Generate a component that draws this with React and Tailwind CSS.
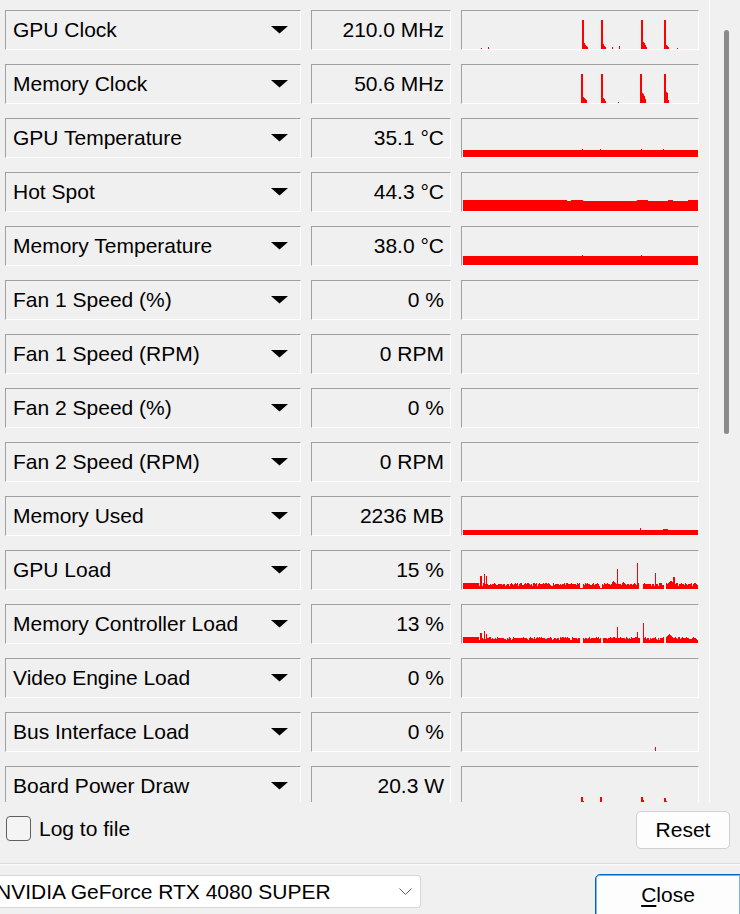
import React from "react";

const W = 236;
const H = 38;

// small seeded random so the graphs look the same every render
function makeRand(seed) {
  let s = seed;
  return () => {
    s = (s * 16807) % 2147483647;
    return s / 2147483647;
  };
}

const empty = () => new Array(W).fill(0);

function put(a, x, vals) {
  vals.forEach((v, i) => {
    if (x + i >= 0 && x + i < W) a[x + i] = Math.max(a[x + i], v);
  });
}

function clockSeries(spikes, ticks) {
  const a = empty();
  spikes.forEach(([x, h, tail]) => put(a, x, [h, h, ...tail]));
  ticks.forEach(([x, h]) => put(a, x, [h]));
  return a;
}

function bandSeries(h, bumps) {
  const a = new Array(W).fill(h);
  a[0] = 0;
  bumps.forEach(([x, v]) => put(a, x, v));
  return a;
}

function hotSpotSeries() {
  const r = makeRand(77);
  const a = new Array(W).fill(11);
  a[0] = 0;
  let i = 95;
  while (i < W) {
    const len = 4 + Math.floor(r() * 14);
    const v = r() > 0.5 ? 10 : 11;
    for (let k = i; k < Math.min(W, i + len); k++) a[k] = v;
    i += len;
  }
  return a;
}

function loadSeries(seed, spikes, gaps, humps) {
  const r = makeRand(seed);
  const a = empty();
  for (let i = 1; i < W; i++) {
    if (i < 17) {
      a[i] = 6;
      continue;
    }
    const n = r();
    a[i] = n < 0.08 ? 3 : n < 0.3 ? 4 : n < 0.8 ? 5 : 6;
  }
  humps.forEach(([x, vals]) => vals.forEach((v, k) => (a[x + k] = v)));
  gaps.forEach(([x, len, v]) => {
    for (let k = x; k < x + len; k++) a[k] = v;
  });
  spikes.forEach(([x, h, w]) => {
    for (let k = 0; k < w; k++) a[x + k] = h;
  });
  return a;
}

const graphs = {
  gpuClock: clockSeries(
    [
      [120, 29, [6, 4, 3, 2]],
      [139, 29, [5, 3, 2]],
      [179, 29, [7, 6, 4, 2]],
      [202, 29, [4, 3, 2]],
    ],
    [
      [19, 1],
      [26, 2],
      [150, 2],
      [157, 3],
      [215, 1],
    ]
  ),
  memClock: clockSeries(
    [
      [119, 29, [6, 5, 4, 3]],
      [139, 29, [5, 4, 2]],
      [178, 29, [10, 9, 7, 4]],
      [202, 29, [11, 10, 3]],
    ],
    [[156, 1]]
  ),
  gpuTemp: bandSeries(7, [
    [120, [8]],
    [138, [8]],
    [179, [8]],
    [201, [8]],
  ]),
  hotSpot: hotSpotSeries(),
  memTemp: bandSeries(9, [
    [120, [10]],
    [179, [10]],
  ]),
  memUsed: bandSeries(5, [
    [178, [7]],
    [201, [6, 6, 6, 6, 6]],
  ]),
  gpuLoad: loadSeries(
    11,
    [
      [18, 13, 2],
      [22, 15, 1],
      [24, 13, 1],
      [155, 20, 1],
      [175, 26, 1],
      [193, 16, 1],
      [211, 12, 2],
    ],
    [
      [118, 3, 1],
      [138, 2, 1],
      [177, 4, 0],
      [202, 2, 0],
    ],
    [
      [150, [7, 8, 7, 6]],
      [160, [6, 7, 6]],
      [206, [6, 7, 8, 8, 7]],
    ]
  ),
  memLoad: loadSeries(
    23,
    [
      [18, 10, 2],
      [22, 12, 1],
      [24, 9, 1],
      [155, 16, 1],
      [175, 11, 1],
      [181, 20, 1],
    ],
    [
      [118, 3, 0],
      [139, 2, 0],
      [178, 4, 0],
      [202, 2, 0],
    ],
    [[205, [7, 8, 9, 8, 7, 6]]]
  ),
  busLoad: clockSeries([], [[193, 4]]),
  power: clockSeries(
    [
      [119, 8, [4, 3, 3]],
      [138, 8, [3, 2]],
      [179, 8, [5, 3]],
      [202, 7, [4, 2]],
    ],
    [[157, 2]]
  ),
};

const rows = [
  ["GPU Clock", "210.0 MHz", graphs.gpuClock],
  ["Memory Clock", "50.6 MHz", graphs.memClock],
  ["GPU Temperature", "35.1 °C", graphs.gpuTemp],
  ["Hot Spot", "44.3 °C", graphs.hotSpot],
  ["Memory Temperature", "38.0 °C", graphs.memTemp],
  ["Fan 1 Speed (%)", "0 %", null],
  ["Fan 1 Speed (RPM)", "0 RPM", null],
  ["Fan 2 Speed (%)", "0 %", null],
  ["Fan 2 Speed (RPM)", "0 RPM", null],
  ["Memory Used", "2236 MB", graphs.memUsed],
  ["GPU Load", "15 %", graphs.gpuLoad],
  ["Memory Controller Load", "13 %", graphs.memLoad],
  ["Video Engine Load", "0 %", null],
  ["Bus Interface Load", "0 %", graphs.busLoad],
  ["Board Power Draw", "20.3 W", graphs.power],
];

const sunken =
  "border border-t-[#a0a0a0] border-l-[#a0a0a0] border-r-white border-b-white";

function toPath(a) {
  let d = "";
  a.forEach((h, i) => {
    if (h > 0) d += `M${i} ${H - h}h1v${h}h-1z`;
  });
  return d;
}

function Graph({ data }) {
  return (
    <svg width={W} height={H} className="block" shapeRendering="crispEdges">
      {data && <path d={toPath(data)} fill="#ff0000" />}
    </svg>
  );
}

function SensorRow({ label, value, data }) {
  return (
    <div className="flex gap-[10px] h-[40px] shrink-0">
      <div
        className={`w-[296px] ${sunken} flex items-center justify-between pl-[7px] pr-[12px]`}
      >
        <span>{label}</span>
        <svg width="17" height="8" className="block">
          <polygon points="0,0 17,0 8.5,7.5" fill="#000" />
        </svg>
      </div>
      <div className={`w-[140px] ${sunken} flex items-center justify-end pr-[6px]`}>
        {value}
      </div>
      <div className={`w-[238px] ${sunken}`}>
        <Graph data={data} />
      </div>
    </div>
  );
}

export default function App() {
  return (
    <div className="w-[740px] h-[914px] overflow-hidden bg-[#f0f0f0] text-black text-[21px] font-['Liberation_Sans',Arial,sans-serif] flex flex-col">
      <div className="flex h-[802px] shrink-0">
        <div className="w-[709px] h-full overflow-hidden pl-[5px] pt-[10px] flex flex-col gap-[14px]">
          {rows.map(([label, value, data]) => (
            <SensorRow key={label} label={label} value={value} data={data} />
          ))}
        </div>
        <div className="w-px bg-white" />
        <div className="flex-1 pt-[30px] pl-[14px]">
          <div className="w-[5px] h-[404px] rounded-full bg-[#8a8a8a]" />
        </div>
      </div>

      <div className="h-[61px] shrink-0 flex items-start">
        <label className="flex items-center gap-[8px] mt-[14px] ml-[6px] h-[25px]">
          <span className="w-[25px] h-[25px] rounded-[4px] border border-[#5f5f5f] bg-[#f4f4f4]" />
          <span>Log to file</span>
        </label>
        <button className="ml-auto mr-[10px] mt-[9px] w-[94px] h-[38px] rounded-[5px] border border-[#d0d0d0] bg-[#fdfdfd] flex items-center justify-center">
          Reset
        </button>
      </div>

      <div className="h-px bg-[#dcdcdc] shrink-0" />
      <div className="h-px bg-[#fafafa] shrink-0" />

      <div className="flex items-start">
        <div className="mt-[10px] w-[421px] h-[33px] bg-white border border-[#d6d6d6] border-l-0 rounded-r-[4px] flex items-center justify-between pr-[8px]">
          <span className="-ml-[4px] whitespace-nowrap">NVIDIA GeForce RTX 4080 SUPER</span>
          <svg width="13" height="8" className="block">
            <polyline points="0.5,0.5 6.5,6.5 12.5,0.5" fill="none" stroke="#5c5c5c" strokeWidth="1" />
          </svg>
        </div>
        <button className="ml-auto -mr-px mt-[9px] w-[146px] h-[42px] rounded-tl-[5px] border border-[#0067c0] shadow-[inset_0_0_0_1px_#7fb2e5] bg-[#fdfdfd] flex items-center justify-center">
          <span>
            <span className="underline underline-offset-[3px]">C</span>lose
          </span>
        </button>
      </div>
    </div>
  );
}
